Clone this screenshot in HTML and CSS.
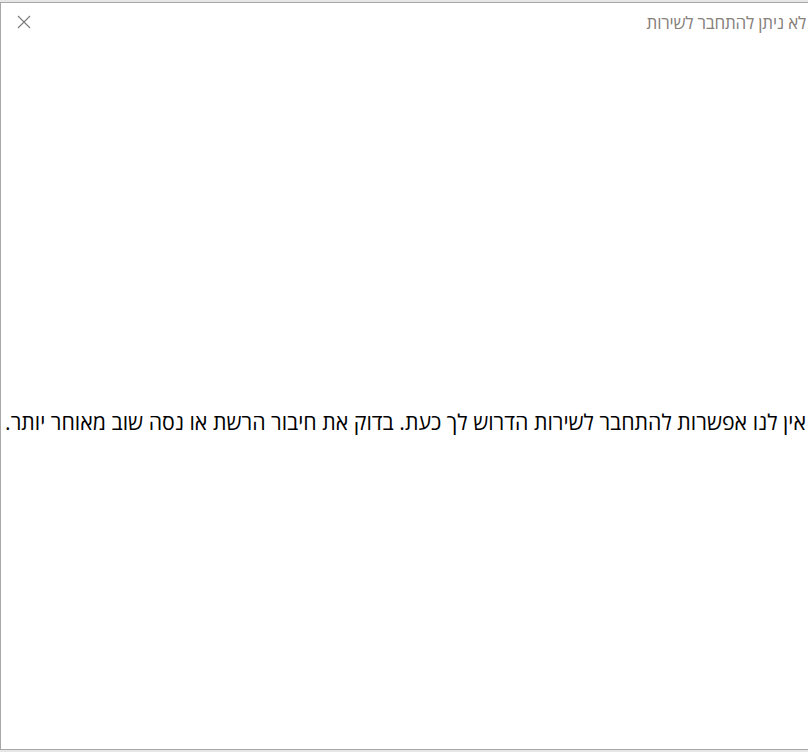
FILE: index.html
```html
<!DOCTYPE html>
<html lang="he" dir="rtl">
<head>
<meta charset="utf-8">
<title>לא ניתן להתחבר לשירות</title>
<link rel="stylesheet" href="styles.css">
</head>
<body>
<div class="dialog">
  <div class="titlebar">
    <span class="title">לא ניתן להתחבר לשירות</span>
    <button class="close" aria-label="סגור">
      <svg width="14" height="14" viewBox="0 0 14 14"><path d="M1 1L13 13M13 1L1 13" stroke="#7a7a7a" stroke-width="1.1" fill="none"/></svg>
    </button>
  </div>
  <div class="content">
    <p class="message">אין לנו אפשרות להתחבר לשירות הדרוש לך כעת. בדוק את חיבור הרשת או נסה שוב מאוחר יותר.</p>
  </div>
</div>
</body>
</html>
```
FILE: styles.css
```css
html, body {
  margin: 0;
  padding: 0;
  height: 100%;
  overflow: hidden;
  background: #e6e6e6;
}
body {
  font-family: "Open Sans", "Liberation Sans", "DejaVu Sans", sans-serif;
}
.dialog {
  box-sizing: border-box;
  margin: 2px 0 0 2px;
  width: 808px;
  height: 748px;
  background: #fff;
  border: 1px solid #a8a8a8;
  border-right: none;
  display: flex;
  flex-direction: column;
}
.titlebar {
  height: 38px;
  display: flex;
  align-items: center;
  justify-content: space-between;
  padding: 0 2px 0 15px;
}
.title {
  font-size: 17px;
  color: #86807a;
  letter-spacing: -0.2px;
}
.close {
  border: none;
  background: transparent;
  padding: 0;
  width: 16px;
  height: 16px;
  display: flex;
  align-items: center;
  justify-content: center;
}
.content {
  flex: 1;
  display: flex;
  align-items: center;
  justify-content: flex-start;
  padding-top: 52px;
}
.message {
  margin: 0 2px 0 0;
  font-size: 21.3px;
  color: #000;
  white-space: nowrap;
}
```
